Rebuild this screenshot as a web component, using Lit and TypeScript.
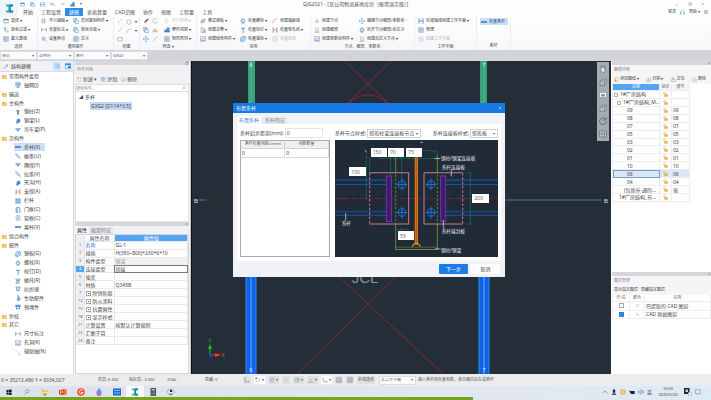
import { LitElement, html, svg, css, nothing } from "lit";
import { customElement, property } from "lit/decorators.js";
import { classMap } from "lit/directives/class-map.js";

const base = css`
  * { box-sizing: border-box; }
  button, input, select {
    font: inherit; color: inherit; margin: 0; padding: 0; border: 0;
    background: none; border-radius: 0; min-width: 0; appearance: none;
    line-height: 1; text-align: left; white-space: nowrap; outline: none;
  }
  svg { display: block; flex: none; }
`;

const B = "#3f82c8";
const O = "#f0a63c";
const G = "#8a8f96";

/* 16 x 16 glyphs */
const glyphs: Record<string, unknown> = {
  folder: svg`<path d="M0 3h6l2 2h7v10H0z" fill="#e3ad3c"/><path d="M2 7h14l-2 8H0z" fill="#f6cf6b"/>`,
  grid: svg`<path d="M2 2h12v9H2zM6 2v9M10 2v9M2 6h12M8 11v4M4 15h8" stroke=${B} stroke-width="1.4" fill="none"/>`,
  column: svg`<path d="M5 3l3-2 3 2v11l-3 2-3-2z" fill="#8fb5dd"/><path d="M8 5v11M3 5h9" stroke=${B} stroke-width="2"/>`,
  slab: svg`<path d="M5 4l6-3 3 2v7l-8 5-3-2z" fill="#3d7fc6"/><path d="M6 7l8-4M6 7v8" stroke="#a9cdf0" stroke-width="1.2"/>`,
  bracket: svg`<path d="M1 5h14M4 6l4 5 4-5" stroke=${B} stroke-width="2.4" fill="none"/>`,
  bar: svg`<path d="M0 8h16" stroke="#3477c4" stroke-width="4"/>`,
  diag: svg`<path d="M1 2l4 1 8 9 2 3M1 5l11 9" stroke="#6a7fae" stroke-width="1.8" fill="none"/>`,
  hframe: svg`<path d="M3 1v14M13 1v14" stroke="#a58377" stroke-width="2.4"/><path d="M3 4l10 8M13 4L3 12" stroke="#e3957d" stroke-width="1.4"/>`,
  rail: svg`<path d="M3 0v16M8 0v16M13 0v16M1 5h14M1 11h14" stroke=${B} stroke-width="1.8"/>`,
  door: svg`<path d="M3 16V2h10v14M6 16V5" stroke=${B} stroke-width="2" fill="none"/>`,
  window: svg`<path d="M3 2h10v12H3zM8 2v12M3 8h10" stroke="#89a9cc" stroke-width="1.7" fill="none"/>`,
  plate: svg`<path d="M5 2h9v8l-5 4H2V6z" stroke=${B} stroke-width="1.8" fill="#dbeafa"/><path d="M5 11l6-6" stroke=${B} stroke-width="1.6"/>`,
  nut: svg`<path d="M5 1h6l4 7-4 7H5L1 8z" fill="#9dbbdc"/><circle cx="8" cy="8" r="3.6" fill="#fff" stroke=${B}/>`,
  stud: svg`<path d="M3 2h10v3H3zM7 5h3v11H7z" fill="#8d9cb4"/>`,
  support: svg`<path d="M1 3h14M3 7h10M5 7v8M11 7v8M8 3v9M1 15h6" stroke="#6f8cae" stroke-width="2"/>`,
  key: svg`<path d="M1 3h14M4 3v9h8V3M8 3v12" stroke="#5591d4" stroke-width="1.8" fill="none"/>`,
  rib: svg`<path d="M8 0v16M8 5l5 3v5H5" stroke=${B} stroke-width="2.4" fill="none"/>`,
  embed: svg`<path d="M1 2h14v6H1z" fill="#4f93dd"/><path d="M4 8v7M12 8v7M4 12h8" stroke=${B} stroke-width="1.8"/>`,
  dim: svg`<path d="M1 2v12M15 2v12M1 7h14M4 5L1 7l3 2M12 5l3 2-3 2" stroke="#7b828c" stroke-width="1.2" fill="none"/>`,
  hole: svg`<path d="M1 2h14v12H1z" stroke="#7383a0" stroke-width="1.4" fill="none"/><path d="M3 11l4-5 3 3 3-4M4 12h8" stroke=${B} stroke-width="1.5" fill="none"/>`,
  axis: svg`<path d="M1 2l12 12" stroke="#9aa3b0" stroke-width="1.4" stroke-dasharray="3 1.5"/><circle cx="13" cy="14" r="1.6" fill="#9aa3b0"/>`,
  select: svg`<path d="M2 3h12v10H2z" stroke="#73879c" stroke-width="1.6" fill="#fff"/><path d="M2 3h12v3H2z" fill=${B}/>`,
  filter: svg`<path d="M1 2h9L7 7v6l-2 1V7z" fill="#7ba6d6"/><path d="M10 9h5M10 13h5" stroke=${G} stroke-width="1.5"/>`,
  table: svg`<path d="M2 2h12v12H2z" fill="#e5edf6" stroke="#6c8fb8" stroke-width="1.5"/><path d="M2 6h12M2 10h12M7 2v12" stroke="#6c8fb8" stroke-width="1.2"/>`,
  lines: svg`<path d="M4 1v14M9 1v14M1 5h13M1 11h13" stroke=${G} stroke-width="1.3"/>`,
  origin: svg`<circle cx="7" cy="7" r="4.5" stroke=${G} stroke-width="1.4" fill="none"/><path d="M10 10l5 5M7 4v6M4 7h6" stroke="#6d9bd0" stroke-width="1.4"/>`,
  copy: svg`<path d="M2 1h8v10H2z" fill="#cfe1f5" stroke=${B} stroke-width="1.4"/><path d="M6 6h8v9H6z" fill="#fff" stroke=${B} stroke-width="1.4"/>`,
  line: svg`<path d="M2 14L14 2" stroke=${G} stroke-width="1.3"/>`,
  circle: svg`<circle cx="8" cy="8" r="6" stroke=${G} stroke-width="1.4" fill="none"/>`,
  arc: svg`<path d="M2 14C3 5 8 2 14 3" stroke=${G} stroke-width="1.4" fill="none"/>`,
  rect: svg`<path d="M2 4h12v9H2z" stroke=${G} stroke-width="1.3" fill="none"/>`,
  brush: svg`<path d="M2 15l3-7 8-7 2 2-7 8z" fill="#c58b3b"/><path d="M5 8l8-7 2 2-7 8z" fill="#5d6a77"/>`,
  rotate: svg`<circle cx="8" cy="8" r="6" stroke="#8aa6c8" stroke-width="1.6" fill="none" stroke-dasharray="30 6"/>`,
  mirror: svg`<path d="M7 2v12H1z" fill="#86b5e8"/><path d="M9 2v12h6z" fill=${O}/>`,
  move: svg`<path d="M8 0v16M0 8h16M5 3l3-3 3 3M5 13l3 3 3-3M3 5L0 8l3 3M13 5l3 3-3 3" stroke="#6fa1d8" stroke-width="1.5" fill="none"/>`,
  cut: svg`<path d="M1 13V8l6-2V1h8v12z" fill="#4a90dc"/><path d="M1 13h14" stroke="#2f67a8" stroke-width="2"/>`,
  solid: svg`<path d="M3 6l9-4 2 3-3 7-9 1z" fill="#b8bec6" stroke="#8a8f96"/>`,
  part: svg`<path d="M3 2h6v4h5v9H3z" fill="#e7eaee" stroke="#8a8f96" stroke-width="1.3"/><path d="M9 9h5v6H9z" fill="#e08a5a"/>`,
  node: svg`<path d="M8 1v14M2 9h12" stroke="#7e9fc4" stroke-width="1.8"/><circle cx="8" cy="9" r="3" fill="#b9d1ec"/>`,
  detail: svg`<path d="M5 2v12M11 2v12M2 14h12" stroke="#c08f72" stroke-width="1.7"/>`,
  save: svg`<path d="M1 1h14v14H1z" fill="#6ea6df"/><path d="M4 1h8v5H4zM4 9h8v6H4z" fill="#fff"/>`,
  undo: svg`<path d="M14 12c0-6-6-8-11-5M6 2L2 7l6 3" stroke=${B} stroke-width="1.8" fill="none"/>`,
  redo: svg`<path d="M2 12c0-6 6-8 11-5M10 2l4 5-6 3" stroke="#a9b4c2" stroke-width="1.8" fill="none"/>`,
  search: svg`<circle cx="9" cy="6" r="4.6" stroke="#6b7178" stroke-width="1.4" fill="none"/><path d="M6 10l-5 5" stroke="#6b7178" stroke-width="1.6"/>`,
  newdoc: svg`<path d="M4 1h8v13H4z" stroke="#9aa0a8" stroke-width="1.3" fill="#fff"/><path d="M1 5h5M3 2v6" stroke=${O} stroke-width="1.6"/>`,
  deldoc: svg`<path d="M2 2h8v10H2z" stroke="#9aa0a8" stroke-width="1.3" fill="#fff"/><circle cx="11" cy="11" r="4" fill="#fff" stroke="#8390a0" stroke-width="1.3"/><path d="M9 13l4-4" stroke="#8390a0"/>`,
  lock: svg`<path d="M2 7V4c0-4 6-4 6 0v3" stroke="#e39b2e" stroke-width="1.8" fill="none"/><path d="M4 7h11v8H4z" fill="#efa533"/><path d="M6 10h6" stroke="#fbe0a8" stroke-width="1.5"/>`,
  addsheet: svg`<path d="M3 2h10v12H3z" stroke="#d99a48" stroke-width="1.5" fill="#fff4e0"/><path d="M1 11h7M5 8v7" stroke="#e0872d" stroke-width="2"/>`,
  split: svg`<path d="M2 4v10h12V2M6 9h5M8 2v5" stroke="#7b8794" stroke-width="1.5" fill="none"/>`,
  pin: svg`<path d="M2 4h8M2 8h12v6H2zM6 1v7" stroke="#c08c4a" stroke-width="1.5" fill="none"/>`,
  tri: svg`<path d="M6 4l6 4-6 4z" fill="none" stroke="#a8adb4" stroke-width="1.5"/>`,
  angle: svg`<path d="M3 2v11h11" stroke="#6f757c" stroke-width="1.6" fill="none"/>`,
  snap: svg`<path d="M3 3h9v9H3z" stroke=${G} stroke-width="1.3" stroke-dasharray="2 1" fill="none"/><path d="M1 1h4v4H1z" fill=${B}/>`,
  cross: svg`<path d="M3 3l10 10M13 3L3 13" stroke="#b3b8be" stroke-width="1.4"/>`,
  osnap: svg`<path d="M3 4l5-2 5 2v7l-5 3-5-3zM3 4l5 3 5-3M8 7v7" stroke="#9399a0" stroke-width="1.3" fill="none"/>`,
  polar: svg`<circle cx="8" cy="8" r="5.5" stroke=${G} stroke-width="1.4" fill="none"/><path d="M8 8h7M8 8V3" stroke=${G} stroke-width="1.6"/>`,
  pencil: svg`<path d="M2 14h12M4 12l8-9" stroke=${G} stroke-width="1.6"/>`,
  ucs: svg`<path d="M3 2v8l4 3h8" stroke="#2f83d8" stroke-width="1.8" fill="none"/>`,
  frame: svg`<path d="M2 2h12v12H2zM5 5h6v6H5zM2 14l3-3M14 14l-3-3" stroke="#7c828a" stroke-width="1.3" fill="none"/>`,
  layers: svg`<path d="M4 5h9v9H4z" fill="#e8ebee" stroke="#55606b"/><path d="M2 2h9v9" fill="none" stroke="#55606b"/>`,
  cube: svg`<path d="M2 6l4-4h9v8l-4 5H2z" fill="#b4babf" stroke="#5f6973"/><path d="M2 6h9v9M11 6l4-4" stroke="#5f6973" fill="none"/>`,
  view: svg`<path d="M1 3h14v10H1z" fill="#fff" stroke="#6f7880"/><path d="M4 6h8v5H4z" fill="#8d959c"/>`,
  orbit: svg`<path d="M14 5a7 7 0 1 0 1 4M14 1v5H9" stroke="#535d67" stroke-width="1.5" fill="none"/>`,
  four: svg`<path d="M1 2h14v12H1zM6 2v12M11 2v12M1 8h14" stroke="#5f6973" stroke-width="1.2" fill="#c2c8cd"/>`,
  win: svg`<path d="M1 3l6-1v6H1zM8 2l7-1v7H8zM1 9h6v6l-6-1zM8 9h7v7l-7-1z" fill="#15181d"/>`,
  files: svg`<path d="M1 3h5l2 2h7v9H1z" fill="#f3c54b"/><path d="M1 8h14v7H1z" fill="#fbe08d"/><path d="M5 11h6v4H5z" fill="#5aa2dd"/>`,
  ppt: svg`<circle cx="9.5" cy="8" r="6.5" fill="#ee7a50"/><path d="M0 4h9v9H0z" fill="#cf4420"/><path d="M3 11V6h2.5a1.5 1.5 0 0 1 0 3.2H3" stroke="#fff" stroke-width="1.2" fill="none"/>`,
  swirl: svg`<circle cx="8" cy="8" r="7.5" fill="#ee4f27"/><path d="M12 5C8 2 4 5 5 9s6 4 7 0H8" stroke="#fff" stroke-width="1.8" fill="none"/>`,
  flame: svg`<path d="M8 0c5 5 6 8 5 11a5 5 0 0 1-10 0C2 8 4 5 8 0z" fill="#4aa0f4"/><path d="M8 6c4 2 6 5 3 9H6z" fill="#d464c8"/><path d="M4 9c3 0 5 3 5 6H6z" fill="#f05f5f"/>`,
  cloud: svg`<path d="M0 1h16v14H0z" fill="#176bd0"/><path d="M2 5h12M2 10h12" stroke="#7fc0ff" stroke-width="2"/>`,
  ibeam: svg`<path d="M2 1h12v3.5H10v7h4V15H2v-3.5h4v-7H2z" fill="#2aa9c9"/><path d="M8 1h6v3.5H10v7h4V15H8z" fill="#1c86ac"/>`,
  calc: svg`<path d="M3 0h11v16H3z" fill="#3d4f4c"/><path d="M5 2h7v3H5z" fill="#9fd8c0"/><path d="M5 8h7M5 11h7M5 14h7" stroke="#cfd6d4" stroke-width="1.4" stroke-dasharray="1.5 1"/>`,
  bird: svg`<path d="M1 8c0-6 9-8 12-2l3 2-3 2c-2 5-10 6-12-2z" fill="#f5f5ee" stroke="#777" stroke-width="1"/><circle cx="8" cy="6" r="2.5" fill="#23282c"/><path d="M3 11h8v3H5z" fill="#58a548"/>`,
  caret: svg`<path d="M2 11l6-6 6 6" stroke="#555" stroke-width="1.5" fill="none"/>`,
  mic: svg`<path d="M5 1h6v9H5zM3 12h10v3H3z" fill="#1d2126"/>`,
  sun: svg`<circle cx="8" cy="8" r="7.5" fill="#f6b565"/><circle cx="8" cy="8" r="3" fill="#fbd9a6"/>`,
  battery: svg`<path d="M0 3l3 2h12v8H5L3 9z" fill="#1d2126"/>`,
  sound: svg`<path d="M1 6h3l4-4v12l-4-4H1zM11 5c2 2 2 4 0 6M13 3c3 3 3 7 0 10" stroke="#5c6168" stroke-width="1.3" fill="none"/>`,
  badge: svg`<path d="M0 0h11v12H0z" fill="#23282e"/><path d="M3 3h5v5H3z" fill="#cfd3d8"/><circle cx="12" cy="12" r="4" fill="#eef0f2" stroke="#8a8f96"/>`,
  note: svg`<path d="M1 2h14v10h-5l-2 3-2-3H1z" stroke="#6c727a" stroke-width="1.3" fill="none"/>`,
  headset: svg`<path d="M2 9V7a6 6 0 0 1 12 0v2M1 8h3v5H1zM12 8h3v5h-3zM13 13c0 2-2 3-5 3" stroke="#4aa0e8" stroke-width="1.5" fill="none"/>`,
  min: svg`<path d="M3 12h9" stroke="#555" stroke-width="1.5"/>`,
  restore: svg`<path d="M3 6h8v8H3zM6 6V3h8v8h-3" stroke="#777" stroke-width="1.3" fill="none"/>`,
  close: svg`<path d="M3 3l10 10M13 3L3 13" stroke="#777" stroke-width="1.4"/>`,
  wclose: svg`<path d="M3 3l10 10M13 3L3 13" stroke="#fff" stroke-width="1.8"/>`,
  pen: svg`<path d="M1 14l4-1 9-9M9 3h6v6" stroke="#5b6a7c" stroke-width="1.6" fill="none"/>`,
  list: svg`<path d="M1 3h3M6 3h9M1 8h3M6 8h9M1 13h3M6 13h9" stroke="#4c9be8" stroke-width="1.8"/>`,
  panel: svg`<path d="M1 2h14v12H1z" fill="#fff" stroke="#2f83d8" stroke-width="1.5"/><path d="M1 2h14v4H1zM8 8h7v6H8z" fill="#2f83d8"/>`,
};

const ico = (name: string, size = 6) =>
  html`<svg width=${size} height=${size} viewBox="0 0 16 16" aria-hidden="true">${glyphs[name]}</svg>`;

interface Cmd { i: string; t?: string; more?: boolean; off?: boolean; on?: boolean; }
interface Col { w: number; items: Cmd[]; }
interface Group { w: number; label: string; cols: Col[]; }

const c = (i: string, t = "", more = false, off = false): Cmd => ({ i, t, more, off });

const groups: Group[] = [
  { w: 38, label: "选择", cols: [{ w: 34, items: [c("select", "选择", true), c("filter", "批化过滤", true), c("table", "复元查找")] }] },
  { w: 76, label: "通用操作", cols: [
    { w: 32, items: [c("lines", "平行辅轴", true), c("dim", "长度标注", true), c("origin", "设置原点")] },
    { w: 42, items: [c("copy", "层间复制构件", true), c("copy", "批化存盘", true), c("table", "定义")] }] },
  { w: 26, label: "绘图", cols: [
    { w: 9, items: [c("line"), c("line"), c("rect")] },
    { w: 10, items: [c("circle", "", true), c("arc", "", true)] }] },
  { w: 57, label: "修改 ▾", cols: [
    { w: 9, items: [c("brush"), c("copy"), c("move")] },
    { w: 12, items: [c("rotate"), c("mirror"), c("line")] },
    { w: 32, items: [c("lines", "平行阵列", true, true), c("cut", "零件切割", true), c("table", "矩形阵列", true)] }] },
  { w: 114, label: "常用", cols: [
    { w: 40, items: [c("solid", "檐式钢板", true), c("part", "创建次零", true), c("hole", "创建组合构件", true)] },
    { w: 32, items: [c("nut", "布置螺栓", true), c("stud", "布置栓钉", true), c("plate", "布置锚栓", true)] },
    { w: 38, items: [c("arc", "创建辅助线"), c("hframe", "布置型孔机", true), c("table", "布置型机", false, true)] }] },
  { w: 104, label: "节点、细部、参数化", cols: [
    { w: 45, items: [c("node", "创建节点"), c("detail", "创建细部"), c("hole", "创建参数化构件", true)] },
    { w: 55, items: [c("move", "编辑节点细部/参数化"), c("nut", "拆开节点细部/自定义"), c("detail", "创建自定义节点", true)] }] },
  { w: 62, label: "工作平面", cols: [{ w: 60, items: [c("save", "柱梁轴线创建工作平面", true), c("table", "管理"), c("table", "隐藏工作平面", false, true)] }] },
  { w: 34, label: "系杆", cols: [{ w: 28, items: [{ i: "bar", t: "布置系杆", on: true }] }] },
];

@customElement("app-ribbon")
class AppRibbon extends LitElement {
  static styles = [base, css`
    :host { display: block; background: #fdfdfe; }
    .top { display: grid; grid-template-columns: 18px 1fr; height: 17px; }
    .logo { display: flex; align-items: center; justify-content: center; background: #eef6f9; }
    .title { display: grid; grid-template-columns: 1fr auto 1fr; height: 8px; align-items: center; color: #555; padding-right: 18px; }
    .quick { display: flex; gap: 5px; padding: 0 2px; align-items: center; font-size: 4px; }
    .quick button, .wbtns button { display: flex; }
    .wbtns { display: flex; justify-content: flex-end; gap: 9px; margin-right: -18px; padding-right: 6px; }
    .tabs { display: flex; height: 8px; padding-left: 1px; align-items: stretch; }
    .tab { padding: 0 4px; height: 8px; color: #555; line-height: 8px; }
    .tab.on { background: #2f8be6; color: #fff; }
    .help { margin-left: auto; display: flex; gap: 4px; align-items: center; padding-right: 3px; font-size: 4px; }
    .groups { display: flex; height: 34px; background: linear-gradient(#fff, #f6f6f9); border-bottom: 1px solid #d5d5da; }
    .group { flex: none; border-right: 1px solid #ececf1; padding: 0 2px; display: flex; flex-direction: column; }
    .cols { display: flex; padding-left: 1px; height: 26px; font-size: 4px; }
    .col { display: flex; flex-direction: column; flex: none; }
    .cmd { display: flex; align-items: center; gap: 1px; height: 9px; color: #333; }
    .cmd svg { margin-right: 1px; }
    .off { opacity: 0.35; }
    .on.cmd { background: #c8def8; height: 7px; margin-top: 1px; color: #1d4c86; padding-left: 1px; }
    .name { text-align: center; font-size: 4px; line-height: 8px; color: #444; }
  `];
  render() {
    const tabs = ["开始", "工程设置", "建模", "表格算量", "CAD识图", "协作", "视图", "工程量", "工具"];
    return html`
      <div class="top">
        <div class="logo">${ico("ibeam", 9)}</div>
        <div>
          <div class="title">
            <div class="quick">${["select", "copy", "save", "undo", "redo", "cut"].map((i) => html`<button aria-label=${i}>${ico(i, 5)}</button>`)}<span>▾</span></div>
            <span>GJG2021 - [某公司物流基地库房（报用演示版）]</span>
            <div class="wbtns">${["min", "restore", "close"].map((i) => html`<button aria-label=${i}>${ico(i, 4)}</button>`)}</div>
          </div>
          <div class="tabs">
            ${tabs.map((t) => html`<button class=${classMap({ tab: true, on: t === "建模" })}>${t}</button>`)}
            <div class="help"><button>登录</button>${ico("headset", 5)}<button>帮助 ▾</button>${ico("table", 4)}</div>
          </div>
        </div>
      </div>
      <div class="groups">
        ${groups.map((g) => html`<div class="group" style="width:${g.w}px">
          <div class="cols">${g.cols.map((col) => html`<div class="col" style="width:${col.w}px">
            ${col.items.map((k) => html`<button class=${classMap({ cmd: true, off: !!k.off, on: !!k.on })} aria-label=${k.t || k.i}>
              ${ico(k.i, 6)}<span>${k.t}</span>${k.more ? html`<span>▾</span>` : nothing}</button>`)}
          </div>`)}</div>
          <div class="name">${g.label}</div>
        </div>`)}
      </div>`;
  }
}

interface Node { t: string; i?: string; on?: boolean; }
const n = (t: string, i?: string, on = false): Node => ({ t, i, on });
const tree: Node[] = [
  n("常用构件类型"), n("轴网(J)", "grid"), n("输送"), n("主构件"), n("钢柱(Z)", "column"), n("钢梁(L)", "slab"),
  n("吊车梁(P)", "bracket"), n("次构件"), n("系杆(X)", "bar", true), n("檩条(U)", "diag"), n("隅撑(Y)", "bracket"),
  n("拉条(V)", "diag"), n("天沟(H)", "slab"), n("支撑(A)", "hframe"), n("栏杆", "rail"), n("门框(C)", "door"),
  n("窗框(C)", "window"), n("幕杆(V)", "bar"), n("组合构件"), n("配件"), n("钢板(G)", "plate"), n("螺栓(S)", "nut"),
  n("栓钉(D)", "stud"), n("檩托(R)", "support"), n("抗剪键", "key"), n("生肋配件", "rib"), n("预埋件", "embed"),
  n("复核"), n("其它"), n("尺寸标注", "dim"), n("孔洞(K)", "hole"), n("辅助轴(N)", "axis"),
];

@customElement("component-tree")
class ComponentTree extends LitElement {
  static styles = [base, css`
    :host { display: block; background: #fff; border-right: 1px solid #d9dadd; }
    .head { display: flex; align-items: center; gap: 3px; height: 11px; padding: 0 1px 0 3px; background: #f0f1f4; border-bottom: 1px solid #dcdde0; }
    .head span { flex: 1; }
    .head button { display: flex; align-items: center; justify-content: center; width: 8px; height: 9px; background: #d6e9fc; }
    ul { list-style: none; margin: 0; padding: 0; display: grid; grid-template-rows: repeat(32, 1fr); height: 284px; }
    li { display: flex; align-items: center; padding-left: 2px; }
    li button { display: flex; align-items: center; gap: 2px; height: 8px; color: #444; }
    .leaf { padding-left: 14px; }
    .leaf button { padding: 0 1px; gap: 3px; }
    .leaf .on { background: #cbdff8; width: 31px; }
  `];
  render() {
    return html`
      <div class="head">${ico("pen", 5)}<span>结构建模</span><button aria-label="列表">${ico("list", 6)}</button><button aria-label="面板">${ico("panel", 6)}</button></div>
      <ul>${tree.map((k) => html`<li class=${k.i ? "leaf" : ""}><button class=${k.on ? "on" : ""}>${ico(k.i ?? "folder", k.i ? 6 : 5)}${k.t}</button></li>`)}</ul>`;
  }
}

const props: [string, string, string, string?][] = [
  ["1", "名称", "GL-1", "link"], ["2", "规格", "H(350~800)*230*6*10"], ["3", "构件类型", "钢梁", "dim"],
  ["4", "连接类型", "固接", "cur"], ["5", "坡度", ""], ["6", "材质", "Q345B"], ["7", "除锈防腐", "", "box"],
  ["12", "防火涂料", "", "box"], ["15", "抗震属性", "", "box"], ["18", "显示样式", "", "box"],
  ["21", "计算设置", "按默认计算规则"], ["22", "汇额子目", ""], ["23", "备注", ""],
];

@customElement("side-panels")
class SidePanels extends LitElement {
  static styles = [base, css`
    :host { display: flex; flex-direction: column; background: #f1f1f3; padding: 0 1px 0 1px; border-right: 1px solid #c6c8cc; }
    .strip { height: 4px; flex: none; background: #d6d7dc; display: flex; justify-content: flex-end; align-items: center; }
    .cap { height: 10px; line-height: 10px; padding-left: 2px; color: #888; font-size: 4px; }
    .tools { display: flex; gap: 4px; height: 9px; align-items: center; padding-left: 2px; color: #555; }
    .tools button { display: flex; gap: 1px; align-items: center; }
    .find { display: flex; height: 8px; align-items: center; background: #fff; border: 1px solid #dedfe2; padding-right: 2px; font-size: 4px; }
    .find input { flex: 1; }
    .find input::placeholder { color: #888; }
    .list { background: #fff; flex: none; height: 130px; padding-top: 1px; border: 1px solid #e2e3e6; border-top: 0; }
    .list button { display: block; height: 8px; }
    .root { margin-left: 3px; }
    .root i { font-style: normal; font-size: 4px; margin-right: 2px; }
    .list .sel { margin: 1px 0 0 14px; padding: 0 1px; background: #c3d8f3; color: #446; }
    .tabs { display: flex; height: 7px; margin-top: 1px; flex: none; }
    .tabs button { padding: 0 2px; color: #888; background: #e4e5e8; }
    .tabs .on { color: #222; background: #f8f8f9; }
    .sheet { flex: 1; background: #fff; border: 1px solid #d6d7da; }
    table { border-collapse: collapse; width: 100%; table-layout: fixed; height: 110px; }
    td, th { padding: 0 0 0 1px; border-right: 1px solid #e3e4e7; border-bottom: 1px solid #e9eaec; line-height: 6px; font-weight: 400; white-space: nowrap; }
    .num { width: 8px; background: #eef0f3; text-align: center; color: #666; font-size: 4px; }
    .key { width: 30px; text-align: left; }
    th, th.key { text-align: center; color: #555; }
    th.val { background: #55a3f3; color: #fff; }
    .link .key { color: #2e6fd6; }
    .dim .val { background: #efeff0; color: #999; }
    .cur .num { background: #55a3f3; color: #fff; }
    .cur .val { outline: 1px solid #777; outline-offset: -1px; }
    .plus { display: inline-flex; width: 5px; height: 5px; border: 1px solid #aaa; margin-right: 2px; vertical-align: middle; align-items: center; justify-content: center; }
    .plus::before { content: ""; width: 1px; height: 1px; background: #555; }
  `];
  render() {
    return html`
      <div class="strip">${ico("restore", 4)}</div>
      <div class="cap">构件列表</div>
      <div class="tools"><button>${ico("newdoc", 5)}新建 ▾</button><button>${ico("copy", 5)}复制</button><button>${ico("deldoc", 5)}删除</button></div>
      <div class="find"><input aria-label="搜索构件" placeholder="搜索构件..." />${ico("search", 4)}</div>
      <div class="list"><button class="root"><i>◢</i>系杆</button><button class="sel">GXG2 [D114*3.5]</button></div>
      <div class="strip">${ico("close", 4)}</div>
      <div class="tabs"><button class="on">属性</button><button>截面特征</button></div>
      <div class="sheet"><table>
        <thead><tr><th class="num"></th><th class="key" scope="col">属性名称</th><th class="val" scope="col">属性值</th></tr></thead>
        <tbody>${props.map(([a, b, v, k]) => html`<tr class=${k ?? ""}><td class="num">${a}</td>
          <td class="key">${k === "box" ? html`<span class="plus"></span>` : nothing}${b}</td><td class="val">${v}</td></tr>`)}</tbody>
      </table></div>`;
  }
}

@customElement("joint-diagram")
class JointDiagram extends LitElement {
  static styles = [base, css`
    :host { display: block; position: relative; background: #202b37; }
    svg { width: 100%; height: 100%; }
    input { position: absolute; width: 10%; height: 8%; background: #fff; padding-left: 2px; color: #666; }
  `];
  render() {
    const boxes: [string, number, number, string][] = [
      ["150", 137, 158, "边距"], ["70", 189, 158, "间距"], ["75", 243, 158, "端距"],
      ["100", 73, 215, "高度"], ["200", 442, 294, "板高"], ["55", 219, 405, "孔距"],
    ];
    const bolt = (x: number, y: number) => svg`<circle cx=${x} cy=${y} r="11"/><path d="M${x - 16} ${y}h32M${x} ${y - 18}v36"/>`;
    return html`
      <svg viewBox="30 135 489 347" preserveAspectRatio="none">
        <g fill="none" stroke="#1454a8" stroke-width="3">
          <path d="M30 254H185M30 267H185M362 254H519M362 267H519M30 348H185M30 358H185M362 348H519M362 358H519"/>
        </g>
        <path d="M30 309H519" stroke="#a3262c" stroke-width="2" stroke-dasharray="42 8 14 8"/>
        <g fill="none" stroke="#0f7a55" stroke-width="2">
          <path d="M134 186V232M124 180V310M197 186V252M230 186V252M160 190H336M320 168H336V190M425 232H442M425 384H442M436 232V384M212 400H250M228 396V410M292 166H320"/>
        </g>
        <path d="M212 186V460H337V180" fill="none" stroke="#5f8a3a" stroke-width="3"/>
        <path d="M212 232V384M337 232V384" stroke="#26303a" stroke-width="4" stroke-dasharray="6 6"/>
        <path d="M212 453H337" stroke="#6c7440" stroke-width="2"/>
        <path d="M274 186V446" stroke="#d9751c" stroke-width="10"/><path d="M274 186V446" stroke="#8d4716" stroke-width="2"/>
        <path d="M262 452c2-8 8-10 12-10s10 2 12 10" stroke="#e0a21c" stroke-width="3" fill="none"/>
        <g fill="none" stroke="#c27f8e" stroke-width="3">
          <path d="M134 232H251V384H134M297 232H413M413 384H297V232"/>
          <path d="M134 232V384M413 232V384" stroke-dasharray="8 5"/>
        </g>
        <g fill="#3a1f66" stroke="#7434ad" stroke-width="3"><path d="M184 242H199V377H184ZM347 242H362V377H347Z"/></g>
        <g fill="none" stroke="#1a6fd4" stroke-width="3">${bolt(231, 267)}${bolt(318, 267)}${bolt(231, 350)}${bolt(318, 350)}</g>
        <g stroke="#e2e6ea" stroke-width="2" fill="none">
          <path d="M62 352V374M328 190H346M379 222V243M355 372V398M330 458H346M119 164l6 8M286 142h8"/>
        </g>
        <g fill="#e8ebee" font-size="14" font-family="'Noto Sans','Noto Sans CJK SC',sans-serif">
          <text x="50" y="388">系杆</text><text x="348" y="194">钢柱/钢梁连接板</text><text x="350" y="221">系杆连接板</text>
          <text x="350" y="411">系杆端封板</text><text x="348" y="466">钢柱/钢梁</text>
        </g>
      </svg>
      ${boxes.map(([v, x, y, l]) => html`<input aria-label=${l} .value=${v} style="left:${((x - 30) / 4.89).toFixed(1)}%;top:${((y - 135) / 3.47).toFixed(1)}%" />`)}`;
  }
}

@customElement("place-dialog")
class PlaceDialog extends LitElement {
  static styles = [base, css`
    :host { display: flex; flex-direction: column; background: #f0f2f5; }
    .bar { display: flex; justify-content: space-between; align-items: center; height: 10px; padding: 0 3px; background: #1879e4; color: #fff; }
    .bar button { display: flex; }
    .tabs { display: flex; gap: 2px; padding: 3px 4px 0; height: 11px; }
    .tabs button { padding: 0 2px; color: #888; background: #e7e9ec; margin-top: 1px; }
    .tabs .on { color: #2a85e0; background: #fff; margin-top: 0; }
    .page { margin: 0 4px; background: #fff; display: grid; grid-template-columns: 90px 1fr; gap: 2px 5px; padding: 4px 3px; }
    .row { display: flex; align-items: center; height: 10px; gap: 1px; white-space: nowrap; }
    .row .grow { flex: 1; }
    .row input { width: 38px; height: 10px; border: 1px solid #e2e4e7; padding-left: 1px; }
    .pick { position: relative; display: flex; height: 9px; border: 1px solid #cfd2d6; }
    .pick::after { content: "▾"; font-size: 4px; line-height: 7px; padding-right: 2px; color: #555; }
    .pick select { width: 48px; padding-left: 1px; }
    .pick .short { width: 22px; }
    .grid { border: 1px solid #a9adb3; height: 117px; }
    table { border-collapse: collapse; width: 100%; table-layout: fixed; }
    th { font-weight: 400; height: 7px; line-height: 6px; padding: 0; background: #eef0f2; border-bottom: 1px solid #d0d3d7; border-right: 1px solid #d0d3d7; white-space: nowrap; overflow: hidden; color: #555; font-size: 4px; }
    td { height: 9px; line-height: 8px; padding: 0 0 0 1px; border-bottom: 1px solid #d8dadd; border-right: 1px solid #d8dadd; }
    joint-diagram { height: 117px; }
    .foot { display: flex; justify-content: flex-end; gap: 3px; padding: 3px 5px 3px 0; }
    .foot button { width: 29px; height: 10px; text-align: center; background: #fdfdfe; }
    .foot .go { background: #1d7be8; color: #fff; border-radius: 1px; }
  `];
  render() {
    return html`
      <div class="bar"><span>布置系杆</span><button aria-label="关闭">${ico("wclose", 4)}</button></div>
      <div class="tabs"><button class="on">布置系杆</button><button>系杆特征</button></div>
      <div class="page">
        <div class="row"><label for="start">系杆起步距离(mm):</label><input id="start" .value=${"0"} /></div>
        <div class="row"><label for="node">系杆节点样式:</label><span class="pick"><select id="node"><option>矩形柱梁连接板节点</option></select></span>
          <span class="grow"></span><label for="plate">系杆连接板样式:</label><span class="pick"><select id="plate" class="short"><option>矩形板</option></select></span></div>
        <div class="grid"><table><thead><tr><th scope="col">系杆布置间距L(mm)</th><th scope="col">间距数量</th></tr></thead><tbody><tr><td>0</td><td>0</td></tr></tbody></table></div>
        <joint-diagram></joint-diagram>
      </div>
      <div class="foot"><button class="go">下一步</button><button>取消</button></div>`;
  }
}

@customElement("model-canvas")
class ModelCanvas extends LitElement {
  static styles = [base, css`
    :host { display: block; position: relative; overflow: hidden; background: #242e39; border-left: 1px solid #0e1216; }
    .scene { position: absolute; inset: 0; width: 100%; height: 100%; }
    place-dialog { position: absolute; left: 41px; top: 42px; width: 272px; }
    .views { position: absolute; right: 2px; top: 1px; width: 12px; padding: 3px 0; background: #a5abb0; display: flex; flex-direction: column; align-items: center; gap: 5px; }
    .views button { display: flex; }
  `];
  render() {
    return html`
      <svg class="scene" viewBox="192 61 420 313" preserveAspectRatio="xMinYMin slice">
        <g stroke="#8a2630" stroke-width="1" fill="none">
          <path d="M345 61L388 103M391 61L348 103M297 374L400 273M335 273L443 374"/>
          <circle cx="368" cy="120" r="25"/><path d="M192 200H233" stroke="#4d2a33"/>
        </g>
        <path d="M505 200H602M199 200H205" stroke="#54797c" stroke-width="1"/>
        <path d="M248 61h7v43h-7zM480 61h7v43h-7z" fill="#37a37c"/>
        <path d="M251 61v43M484 61v43" stroke="#55b790"/>
        <path d="M246 270h10v104h-10zM479 270h10v104h-10z" fill="#0e62ea"/>
        <path d="M251 270v104M484 270v104" stroke="#6fa5f6" stroke-width="1"/>
        <path d="M246 270v104M256 270v104M479 270v104M489 270v104" stroke="#2b8cf5" stroke-width="1"/>
        <path d="M210 355V346" stroke="#16c02c" stroke-width="1"/><path d="M208 349l2-5 2 5z" fill="#16c02c"/>
        <path d="M211 355h7" stroke="#f03a22" stroke-width="1"/><path d="M215 353l6 2-6 2z" fill="#f03a22"/>
        <path d="M209 354h3v3h-3z" fill="#1b3fe0"/>
        <g font-family="'Liberation Sans',sans-serif" text-anchor="middle">
          <text x="251" y="67" font-size="6" fill="#d9f5ea">6</text><text x="484" y="67" font-size="6" fill="#d9f5ea">7</text>
          <text x="251" y="372" font-size="6" fill="#dce9ff">6</text><text x="484" y="372" font-size="6" fill="#dce9ff">7</text>
          <text x="210" y="343" font-size="5" fill="#16c02c">Y</text><text x="223" y="357" font-size="5" fill="#f03a22">X</text>
          <text x="196" y="203" font-size="6" fill="#cfe9df">B</text><text x="606" y="203" font-size="6" fill="#cfe9df">B</text>
          <text x="365" y="283" font-size="15" fill="#878e95">JCL</text>
        </g>
      </svg>
      <div class="views">${["layers", "cube", "view", "cube", "orbit", "four"].map((i) => html`<button aria-label=${i}>${ico(i, 8)}</button>`)}</div>
      <place-dialog></place-dialog>`;
  }
}

const sheets: [string, string, number, boolean?][] = [
  ["1#厂房结构", "", 0], ["1#厂房结构_M...", "", 1], ["09", "09", 2], ["08", "08", 2], ["07", "07", 2], ["05", "05", 2],
  ["03", "03", 2], ["02", "02", 2], ["01", "01", 2], ["10", "10", 2], ["06", "06", 2, true], ["04", "04", 2],
  ["(包质乐-通的...", "张", 3], ["1#厂房结构_布...", "", 4],
];

@customElement("sheet-panels")
class SheetPanels extends LitElement {
  static styles = [base, css`
    :host { display: flex; flex-direction: column; background: #fff; padding-left: 1px; }
    .cap { height: 9px; line-height: 9px; padding-left: 2px; color: #888; font-size: 4px; background: #f5f5f6; }
    .strip { height: 4px; background: #d6d7dc; display: flex; justify-content: flex-end; }
    .tools { display: flex; justify-content: space-between; height: 10px; align-items: center; padding: 0 5px 0 2px; font-size: 4px; color: #444; background: #f5f5f6; }
    .tools button { display: flex; gap: 1px; align-items: center; }
    .tools.text { justify-content: flex-start; gap: 3px; }
    .top { flex: none; height: 211px; }
    table { border-collapse: collapse; table-layout: fixed; width: 78px; height: 118px; }
    td, th { padding: 0 1px; line-height: 6px; font-weight: 400; border: 1px solid #eceded; border-top: 0; white-space: nowrap; overflow: hidden; }
    td svg { margin: auto; }
    thead th { color: #666; background: #f4f4f6; font-size: 4px; }
    thead .a { background: #55a3f3; color: #fff; width: 47px; }
    thead .b { width: 12px; }
    .l1 { padding-left: 4px; } .l2 { padding-left: 14px; } .l3 { padding-left: 11px; } .l4 { padding-left: 6px; }
    .exp { display: inline-block; width: 4px; height: 4px; border: 1px solid #b0b3b8; vertical-align: middle; margin-right: 2px; }
    .on td { background: #d9e8f8; }
    .on td:first-child { outline: 1px solid #7d9abd; outline-offset: -1px; }
    .layers { width: 100%; height: 24px; }
    .layers th { background: #fff; }
    .layers .c { width: 17px; } .layers .d { width: 15px; }
    input { display: block; width: 5px; height: 5px; border: 1px solid #aaa; margin: auto; }
    input:checked { background: #2f83d8; border-color: #2f83d8; }
  `];
  render() {
    return html`
      <div class="top">
        <div class="strip">${ico("close", 4)}</div>
        <div class="cap">翻模列表</div>
        <div class="tools"><button>${ico("addsheet", 5)}添加图纸 ▾</button><button>${ico("split", 5)}分割 ▾</button><button>${ico("pin", 5)}定位</button><button>${ico("deldoc", 5)}删除</button></div>
        <table><thead><tr><th class="a" scope="col">名称</th><th class="b" scope="col">锁定</th><th scope="col">楼号</th></tr></thead>
        <tbody>${sheets.map(([a, b, l, on]) => html`<tr class=${on ? "on" : ""}><td class="l${l}">${l < 2 ? html`<span class="exp"></span>` : nothing}${a}</td><td>${ico("lock", 5)}</td><td>${b}</td></tr>`)}</tbody></table>
      </div>
      <div class="strip">${ico("close", 4)}</div>
      <div class="cap">图层管理</div>
      <div class="tools text"><button>显示指定图层</button><button>隐藏指定图层</button></div>
      <table class="layers"><thead><tr><th class="c" scope="col">开/关</th><th class="d" scope="col">颜色</th><th scope="col">名称</th></tr></thead>
        <tbody>
          <tr><td><input type="checkbox" id="l1" /></td><td>${ico("tri", 5)}</td><td><label for="l1">已提取的 CAD 图层</label></td></tr>
          <tr><td><input type="checkbox" id="l2" checked /></td><td>${ico("tri", 5)}</td><td><label for="l2">CAD 原始图层</label></td></tr>
        </tbody></table>`;
  }
}

@customElement("app-root")
class AppRoot extends LitElement {
  @property({ type: Number }) progress = 67;
  static styles = [base, css`
    :host { display: flex; flex-direction: column; height: 100vh; overflow: hidden; background: #e9e9ee; color: #444;
      font: 5px/1 "Noto Sans", "Noto Sans CJK SC", sans-serif; }
    .filters { display: flex; height: 10px; background: #d3d4da; flex: none; }
    .pick { display: flex; align-items: center; background: #fbfbfc; border: 1px solid #dcdde1; height: 9px; width: 37px; font-size: 4px; }
    .pick select { flex: 1; padding-left: 1px; color: #555; }
    .pick::after { content: "▾"; padding-right: 2px; color: #666; }
    main { flex: 1; min-height: 0; display: grid; grid-template-columns: 74px 117px 1fr 100px; grid-template-rows: 100%; }
    .status { display: flex; align-items: center; height: 12px; flex: none; background: #ececee; font-size: 4px; padding-left: 1px; color: #555; }
    .xy { width: 97px; font-size: 5px; } .floor { width: 31px; } .bottom { width: 38px; } .count { width: 38px; } .hide { width: 38px; }
    .modes { display: flex; gap: 3px; align-items: center; }
    .modes button { display: flex; align-items: center; gap: 1px; height: 8px; padding: 0 1px; background: #dfe0e3; }
    .modes .w { background: #fff; }
    .status .pick { margin: 0 2px 0 4px; }
    .task { position: relative; display: flex; height: 14px; flex: none; background: linear-gradient(90deg, #dfe0ee, #e3e6f2 60%, #dcebf5); padding-bottom: 2px; align-items: center; justify-content: space-between; }
    .apps, .tray { display: flex; align-items: center; }
    .apps button { display: flex; justify-content: center; align-items: center; width: 18px; height: 12px; }
    .apps .on { background: #f6f9fc; }
    .tray { gap: 3px; padding-right: 10px; font-size: 5px; }
    .tray time { text-align: center; line-height: 6px; font-size: 4px; width: 26px; }
    .seek { position: absolute; left: 0; bottom: 0; height: 3px; background: #74a51c; }
  `];
  render() {
    const pick = (label: string, v: string) => html`<span class="pick"><select aria-label=${label}><option>${v}</option></select></span>`;
    return html`
      <app-ribbon></app-ribbon>
      <div class="filters">${pick("楼层", "首层")}${pick("分类", "次构件")}${pick("类型", "系杆")}${pick("构件", "GXG2")}</div>
      <main><component-tree></component-tree><side-panels></side-panels><model-canvas></model-canvas><sheet-panels></sheet-panels></main>
      <div class="status">
        <span class="xy">X = 35213,486 Y = 9334,027</span><span class="floor">层高: 6.300</span><span class="bottom">底标高: -0.300</span>
        <span class="count">2(34)</span><span class="hide">隐藏: 0</span>
        <div class="modes">
          <button aria-label="正交">${ico("angle", 6)}</button><button class="w" aria-label="捕捉">${ico("snap", 6)}▾</button>
          <button aria-label="对象">${ico("osnap", 6)}▾</button><button aria-label="交点">${ico("cross", 6)}</button>
          <button aria-label="极轴">${ico("polar", 6)}▾</button><button aria-label="绘制">${ico("pencil", 6)}▾</button>
          <button class="w" aria-label="坐标">${ico("ucs", 6)}▾</button><button aria-label="图框">${ico("frame", 6)}</button>
          <button aria-label="文档">${ico("frame", 6)}</button><button>折线选择</button>
        </div>
        ${pick("工作平面", "无工作平面")}<span>输入系杆的布置参数，单击确定后生成系杆</span>
      </div>
      <div class="task">
        <div class="apps">${["win", "search", "files", "ppt", "swirl", "flame", "cloud", "ibeam", "calc", "bird"].map((i) => html`<button class=${i === "ibeam" ? "on" : ""} aria-label=${i}>${ico(i, i === "win" || i === "search" ? 6 : 8)}</button>`)}</div>
        <div class="tray">${["caret", "mic", "sun", "battery", "sound"].map((i) => ico(i, 6))}<span>英</span>
          <time>15:50<br />2020/5/20</time>${ico("badge", 8)}${ico("note", 6)}</div>
        <div class="seek" style="width:${this.progress - 0.5}%"></div>
      </div>`;
  }
}
